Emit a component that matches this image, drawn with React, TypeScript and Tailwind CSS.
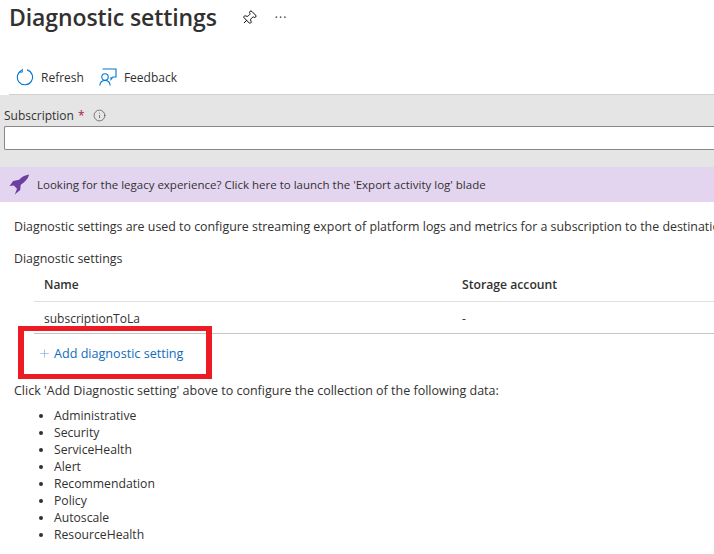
import { Pin, Info, Plus } from 'lucide-react';

const dataTypes = ['Administrative', 'Security', 'ServiceHealth', 'Alert', 'Recommendation', 'Policy', 'Autoscale', 'ResourceHealth'];

export default function App() {
  return (
    <div className="relative h-[554px] w-[714px] overflow-hidden bg-white font-['Open_Sans','Noto_Sans',sans-serif] text-[12px] leading-[17px] text-[#323130]">
      {/* Title */}
      <div className="flex h-[36px] items-center pl-[9px]">
        <h1 className="text-[23px] leading-[36px] font-semibold tracking-[-0.1px] whitespace-nowrap mb-[2px]">Diagnostic settings</h1>
        <Pin className="ml-[24px] h-[16px] w-[16px] rotate-45 text-black" strokeWidth={1.4} />
        <span className="ml-[18px] text-[12px] leading-none tracking-[1px]">···</span>
      </div>

      {/* Toolbar */}
      <div className="ml-[9px] flex h-[59px] items-end border-b border-[#d0d0d0] pb-[8px] pl-[7px]">
        <div className="flex items-center gap-[7px]">
          <svg width="18" height="18" viewBox="0 0 18 18" fill="none" stroke="#0078d4" strokeWidth="1.1">
            <path d="M6 2.2A7.6 7.6 0 1 0 11 1.9" />
            <path d="M6.3 0.8 L6.3 4.2 L2.9 4.2" strokeWidth="0.9" />
          </svg>
          <span>Refresh</span>
        </div>
        <div className="ml-[15px] flex items-center gap-[7px]">
          <svg width="18" height="18" viewBox="0 0 18 18" fill="none" stroke="#0078d4" strokeWidth="1.1">
            <path d="M3.5 1h13.5v8h-3l-2 2.5V9" />
            <circle cx="6" cy="9" r="3.2" />
            <path d="M0.8 17.5c0.3-3.2 2.4-5 5.2-5s4.9 1.8 5.2 5" />
          </svg>
          <span>Feedback</span>
        </div>
      </div>

      {/* Subscription filter */}
      <div className="h-[72px] bg-[#e5e5e5] pt-[11px] pl-[4px]">
        <div className="flex h-[18px] items-center">
          <span>Subscription</span>
          <span className="ml-[4px] text-[#a4262c]">*</span>
          <Info className="ml-[8px] h-[13px] w-[13px] text-[#605e5c]" strokeWidth={1.5} />
        </div>
        <div className="mt-[2px] h-[24px] rounded-l-[2px] border border-[#8a8886] border-r-0 bg-white" />
      </div>

      {/* Legacy banner */}
      <div className="flex h-[35px] items-center bg-[#e3d5f0] pl-[9px]">
        <svg width="21" height="21" viewBox="0 0 21 21" fill="#6b3fa0">
          <path d="M20 0.5c-4 0.6-7.4 2.4-9.8 5.2l-6 1.2L0.5 12l4.3-0.6 3.2 3.4-2.2 5.7 5.4-4.6 0.5-5c4-2.8 7.4-5.8 8.3-10.4z" />
        </svg>
        <span className="ml-[7px] whitespace-nowrap text-[11.5px]">Looking for the legacy experience? Click here to launch the 'Export activity log' blade</span>
      </div>

      {/* Body */}
      <div className="pl-[14px]">
        <p className="mt-[16px] whitespace-nowrap text-[12.4px]">Diagnostic settings are used to configure streaming export of platform logs and metrics for a subscription to the destination</p>
        <p className="mt-[15px] text-[12.4px]">Diagnostic settings</p>

        <div className="ml-[20px] mt-[1px]">
          <div className="flex h-[34px] items-center border-b border-[#e1dfdd] font-semibold">
            <span className="w-[428px] pl-[10px]">Name</span>
            <span className="text-[12.2px]">Storage account</span>
          </div>
          <div className="flex h-[32px] items-center border-b border-[#c8c6c4] pt-[2px]">
            <span className="w-[428px] pl-[10px]">subscriptionToLa</span>
            <span>-</span>
          </div>
        </div>

        <div className="ml-[24px] mt-[9px] flex h-[20px] items-center text-[12.6px] text-[#0f6cbd]">
          <Plus className="h-[13px] w-[13px] text-[#8fb8e6]" strokeWidth={1.5} />
          <span className="ml-[3px]">Add diagnostic setting</span>
        </div>

        <p className="mt-[19px] whitespace-nowrap text-[12.5px]">Click 'Add Diagnostic setting' above to configure the collection of the following data:</p>

        <ul className="mt-[8px] list-disc pl-[40px] text-[12.2px]">
          {dataTypes.map((t) => (
            <li key={t}>{t}</li>
          ))}
        </ul>
      </div>

      {/* Annotation */}
      <div className="absolute left-[18px] top-[326px] h-[53px] w-[194px] border-[5px] border-x-[6px] border-[#ed1c24]" />
    </div>
  );
}
